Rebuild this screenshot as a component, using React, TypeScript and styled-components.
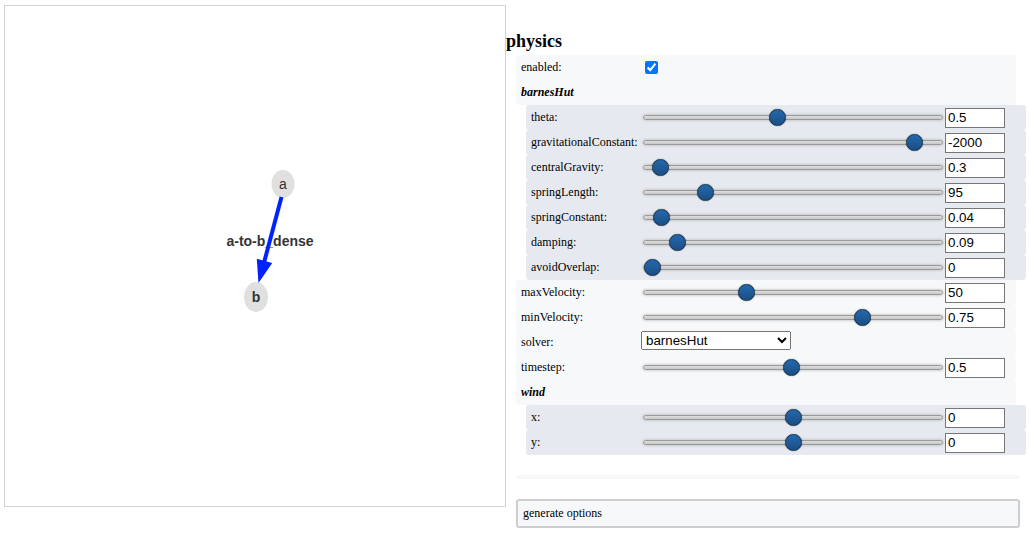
import React from "react";
import styled, { createGlobalStyle } from "styled-components";

const GlobalStyle = createGlobalStyle`
  html, body { margin: 0; padding: 0; background: #ffffff; }
  body { font-family: "Liberation Serif", "Times New Roman", serif; color: #000; }
`;

const Page = styled.div`
  display: flex;
  align-items: flex-start;
  padding: 5px 0 0 4px;
`;

const Canvas = styled.div`
  flex: none;
  width: 500px;
  height: 500px;
  border: 1px solid #d3d3d3;
  background: #ffffff;
`;

const GraphSvg = styled.svg`
  display: block;
  width: 500px;
  height: 500px;
`;

const Config = styled.div`
  display: flex;
  flex-direction: column;
  margin-top: 24px;
  width: 520px;
  font-size: 12px;
`;

const HeaderRow = styled.div`
  height: 26px;
  line-height: 25px;
  font-size: 18px;
  font-weight: bold;
`;

const Item = styled.div<{ $level: 2 | 3 }>`
  display: flex;
  align-items: center;
  box-sizing: content-box;
  width: 495px;
  height: 25px;
  line-height: 25px;
  padding-left: 5px;
  margin-left: ${(p) => (p.$level === 3 ? 20 : 10)}px;
  background: ${(p) => (p.$level === 3 ? "#e6eaf0" : "#f7f8fa")};
  border-radius: 3px;
`;

const Label = styled.div<{ $level: 2 | 3 }>`
  flex: none;
  width: ${(p) => (p.$level === 3 ? 110 : 120)}px;
  height: 25px;
  line-height: 25px;
  white-space: nowrap;
`;

const Check = styled.input`
  margin: 3px 3px 3px 4px;
  width: 13px;
  height: 13px;
`;

const Range = styled.input`
  -webkit-appearance: none;
  appearance: none;
  flex: none;
  width: 300px;
  height: 20px;
  margin: 2px;
  padding: 0;
  border: 0;
  background-color: transparent;

  &::-webkit-slider-runnable-track {
    width: 300px;
    height: 5px;
    background: linear-gradient(to bottom, #dedede 0%, #c8c8c8 99%);
    border: 1px solid #999999;
    box-shadow: #aaaaaa 0 0 3px 0;
    border-radius: 3px;
  }
  &::-webkit-slider-thumb {
    -webkit-appearance: none;
    border: 1px solid #14334b;
    height: 17px;
    width: 17px;
    border-radius: 50%;
    background: linear-gradient(to bottom, #2468ac 0%, #1b4e85 100%);
    box-shadow: #111927 0 0 1px 0;
    margin-top: -7px;
  }
  &:focus { outline: none; }
`;

const ValueBox = styled.input`
  flex: none;
  box-sizing: border-box;
  width: 60px;
  height: 20px;
  margin: 0;
  padding: 1px 2px;
  border: 1px solid #767676;
  border-radius: 0;
  font-family: "Liberation Sans", Arial, sans-serif;
  font-size: 13.333px;
  color: #000;
  background: #fff;
  pointer-events: none;
`;

const Select = styled.select`
  margin: 0 0 4px 0;
  font-family: "Liberation Sans", Arial, sans-serif;
  font-size: 13.333px;
  color: #000;
`;

const Spacer = styled.div`
  margin-top: 20px;
  margin-left: 10px;
  width: 504px;
  height: 4px;
  background: #f7f8fa;
  border-radius: 2px;
`;

const Button = styled.div`
  box-sizing: content-box;
  width: 495px;
  height: 25px;
  line-height: 25px;
  margin: 20px 0 0 10px;
  padding-left: 5px;
  background: #f7f8fa;
  border: 2px solid #ceced0;
  border-radius: 3px;
  cursor: pointer;
`;

type Slider = {
  label: string;
  value: number;
  min: number;
  max: number;
  step: number;
  level: 2 | 3;
};

const SliderRow = ({ label, value, min, max, step, level }: Slider) => (
  <Item $level={level}>
    <Label $level={level}>{label}:</Label>
    <Range type="range" min={min} max={max} step={step} defaultValue={value} />
    <ValueBox type="text" readOnly defaultValue={String(value)} />
  </Item>
);

const barnes: Slider[] = [
  { label: "theta", value: 0.5, min: 0.1, max: 1, step: 0.05, level: 3 },
  { label: "gravitationalConstant", value: -2000, min: -30000, max: 0, step: 50, level: 3 },
  { label: "centralGravity", value: 0.3, min: 0, max: 10, step: 0.05, level: 3 },
  { label: "springLength", value: 95, min: 0, max: 500, step: 5, level: 3 },
  { label: "springConstant", value: 0.04, min: 0, max: 1.2, step: 0.005, level: 3 },
  { label: "damping", value: 0.09, min: 0, max: 1, step: 0.01, level: 3 },
  { label: "avoidOverlap", value: 0, min: 0, max: 1, step: 0.01, level: 3 },
];

const velocity: Slider[] = [
  { label: "maxVelocity", value: 50, min: 0, max: 150, step: 1, level: 2 },
  { label: "minVelocity", value: 0.75, min: 0.01, max: 1, step: 0.01, level: 2 },
];

const wind: Slider[] = [
  { label: "x", value: 0, min: -10, max: 10, step: 0.1, level: 3 },
  { label: "y", value: 0, min: -10, max: 10, step: 0.1, level: 3 },
];

const Graph = () => {
  const tip = { x: 258.5, y: 283 };
  const dx = -23;
  const dy = 85;
  const len = Math.hypot(dx, dy);
  const ux = dx / len;
  const uy = dy / len;
  const L = 23;
  const W = 8;
  const bx = tip.x - ux * L;
  const by = tip.y - uy * L;
  const p1 = `${bx + uy * W},${by - ux * W}`;
  const p2 = `${bx - uy * W},${by + ux * W}`;
  return (
    <GraphSvg viewBox="5 6 500 500">
      <ellipse cx={283} cy={184} rx={11.5} ry={14} fill="#e0e0e0" />
      <ellipse cx={256} cy={297} rx={12} ry={15} fill="#e0e0e0" />
      <line x1={281.5} y1={197} x2={bx + ux * 3} y2={by + uy * 3} stroke="#0022ff" strokeWidth={4} />
      <polygon points={`${tip.x},${tip.y} ${p1} ${p2}`} fill="#0022ff" />
      <text x={270} y={246} textAnchor="middle" fontFamily="'Liberation Sans', Arial, sans-serif" fontSize={14} fontWeight="bold" fill="#343434">
        a-to-b_dense
      </text>
      <text x={283} y={189} textAnchor="middle" fontFamily="'Liberation Sans', Arial, sans-serif" fontSize={14} fill="#343434">
        a
      </text>
      <text x={256} y={302} textAnchor="middle" fontFamily="'Liberation Sans', Arial, sans-serif" fontSize={14} fontWeight="bold" fill="#343434">
        b
      </text>
    </GraphSvg>
  );
};

export default function App() {
  return (
    <>
      <GlobalStyle />
      <Page>
        <Canvas>
          <Graph />
        </Canvas>
        <Config>
          <HeaderRow>physics</HeaderRow>
          <Item $level={2}>
            <Label $level={2}>enabled:</Label>
            <Check type="checkbox" defaultChecked />
          </Item>
          <Item $level={2}>
            <Label $level={2}>
              <i>
                <b>barnesHut</b>
              </i>
            </Label>
          </Item>
          {barnes.map((s) => (
            <SliderRow key={s.label} {...s} />
          ))}
          {velocity.map((s) => (
            <SliderRow key={s.label} {...s} />
          ))}
          <Item $level={2}>
            <Label $level={2}>solver:</Label>
            <Select defaultValue="barnesHut">
              <option value="barnesHut">barnesHut</option>
              <option value="forceAtlas2Based">forceAtlas2Based</option>
              <option value="repulsion">repulsion</option>
              <option value="hierarchicalRepulsion">hierarchicalRepulsion</option>
            </Select>
          </Item>
          <SliderRow label="timestep" value={0.5} min={0.01} max={1} step={0.01} level={2} />
          <Item $level={2}>
            <Label $level={2}>
              <i>
                <b>wind</b>
              </i>
            </Label>
          </Item>
          {wind.map((s) => (
            <SliderRow key={s.label} {...s} />
          ))}
          <Spacer />
          <Button>generate options</Button>
        </Config>
      </Page>
    </>
  );
}
